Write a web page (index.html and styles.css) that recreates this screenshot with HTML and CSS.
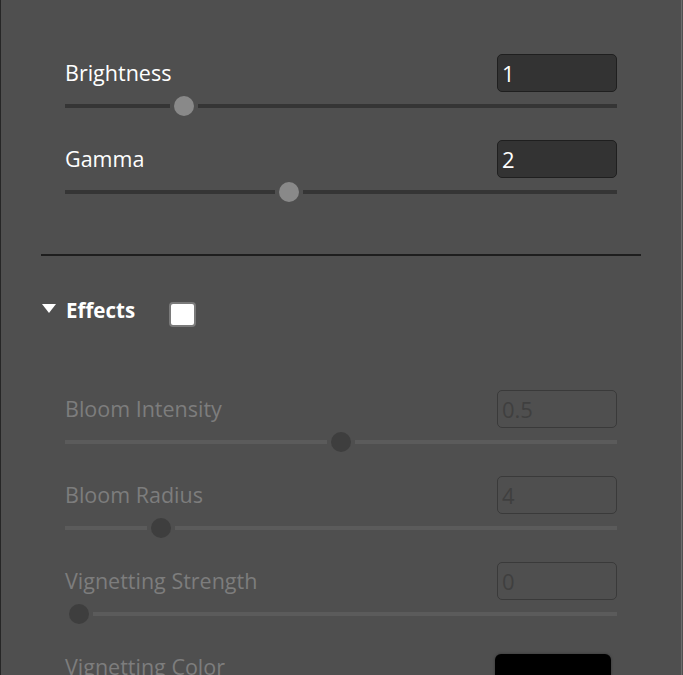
FILE: index.html
```html
<!DOCTYPE html>
<html lang="en">
<head>
<meta charset="utf-8">
<title>Post-processing panel</title>
<link rel="stylesheet" href="styles.css">
</head>
<body>
<div class="panel">
  <section class="group">
    <div class="row">
      <div class="row-head">
        <label class="label">Brightness</label>
        <input class="num" type="text" value="1">
      </div>
      <div class="slider">
        <span class="seg" style="flex-grow:0.2"></span>
        <span class="thumb"></span>
        <span class="seg" style="flex-grow:0.8"></span>
      </div>
    </div>
    <div class="row">
      <div class="row-head">
        <label class="label">Gamma</label>
        <input class="num" type="text" value="2">
      </div>
      <div class="slider">
        <span class="seg" style="flex-grow:0.4"></span>
        <span class="thumb"></span>
        <span class="seg" style="flex-grow:0.6"></span>
      </div>
    </div>
  </section>

  <hr class="divider">

  <section class="folder">
    <div class="folder-head">
      <span class="caret"></span>
      <span class="folder-title">Effects</span>
      <span class="checkbox"></span>
    </div>

    <div class="group disabled">
      <div class="row">
        <div class="row-head">
          <label class="label">Bloom Intensity</label>
          <input class="num" type="text" value="0.5" disabled>
        </div>
        <div class="slider">
          <span class="seg" style="flex-grow:0.5"></span>
          <span class="thumb"></span>
          <span class="seg" style="flex-grow:0.5"></span>
        </div>
      </div>
      <div class="row">
        <div class="row-head">
          <label class="label">Bloom Radius</label>
          <input class="num" type="text" value="4" disabled>
        </div>
        <div class="slider">
          <span class="seg" style="flex-grow:0.156"></span>
          <span class="thumb"></span>
          <span class="seg" style="flex-grow:0.844"></span>
        </div>
      </div>
      <div class="row">
        <div class="row-head">
          <label class="label">Vignetting Strength</label>
          <input class="num" type="text" value="0" disabled>
        </div>
        <div class="slider">
          <span class="seg" style="flex-grow:0"></span>
          <span class="thumb"></span>
          <span class="seg" style="flex-grow:1"></span>
        </div>
      </div>
      <div class="row">
        <div class="row-head">
          <label class="label">Vignetting Color</label>
          <span class="swatch"></span>
        </div>
      </div>
    </div>
  </section>
</div>
</body>
</html>
```

FILE: styles.css
```css
html, body {
  margin: 0;
  padding: 0;
  background: #4f4f4f;
  height: 675px;
  overflow: hidden;
}

.panel {
  box-sizing: border-box;
  width: 682px;
  min-height: 675px;
  border-left: 1px solid #262626;
  border-right: 1px solid #6c6c6c;
  padding: 54px 40px 0 40px;
  font-family: "Open Sans", "Noto Sans", sans-serif;
  color: #ffffff;
}

.group {
  display: flex;
  flex-direction: column;
  gap: 24px;
  padding: 0 24px;
}

.row {
  display: flex;
  flex-direction: column;
  gap: 4px;
}

.row-head {
  display: flex;
  align-items: center;
  justify-content: space-between;
  height: 38px;
}

.label {
  font-size: 21.5px;
  line-height: 40px;
  color: #ffffff;
}

.num {
  box-sizing: border-box;
  width: 120px;
  height: 38px;
  margin: 0;
  padding: 0 0 0 4px;
  border: 1px solid #1f1f1f;
  border-radius: 5px;
  background: #333333;
  color: #ffffff;
  font-family: "Open Sans", "Noto Sans", sans-serif;
  font-size: 22px;
  outline: none;
}

.slider {
  display: flex;
  align-items: center;
  height: 20px;
}

.seg {
  flex-basis: 0;
  height: 4px;
  background: #353535;
}

.thumb {
  flex: 0 0 20px;
  height: 20px;
  margin: 0 4px;
  border-radius: 50%;
  background: #898989;
}

.divider {
  margin: 52px 0 0 0;
  height: 2px;
  border: 0;
  background: #1e1e1e;
}

.folder-head {
  display: flex;
  align-items: flex-start;
  margin-top: 44px;
  height: 27px;
}

.caret {
  width: 0;
  height: 0;
  margin: 4px 10px 0 1px;
  border-left: 7px solid transparent;
  border-right: 7px solid transparent;
  border-top: 9px solid #ffffff;
}

.folder-title {
  font-size: 20.5px;
  font-weight: 700;
  line-height: 20px;
  color: #ffffff;
}

.checkbox {
  box-sizing: border-box;
  width: 27px;
  height: 25px;
  margin: 2px 0 0 34px;
  border: 2px solid #7a7a7a;
  border-radius: 4px;
  background: #ffffff;
}

.folder .group {
  margin-top: 63px;
}

.disabled .label {
  color: #7d7d7d;
}

.disabled .num {
  background: transparent;
  border-color: #3a3a3a;
  color: #3f3f3f;
}

.disabled .seg {
  background: #5b5b5b;
}

.disabled .thumb {
  background: #3e3e3e;
}

.swatch {
  align-self: flex-start;
  width: 116px;
  height: 34px;
  margin: 6px 6px 0 0;
  border-radius: 6px;
  background: #000000;
  box-shadow: 0 0 3px rgba(0, 0, 0, 0.35);
}
```
